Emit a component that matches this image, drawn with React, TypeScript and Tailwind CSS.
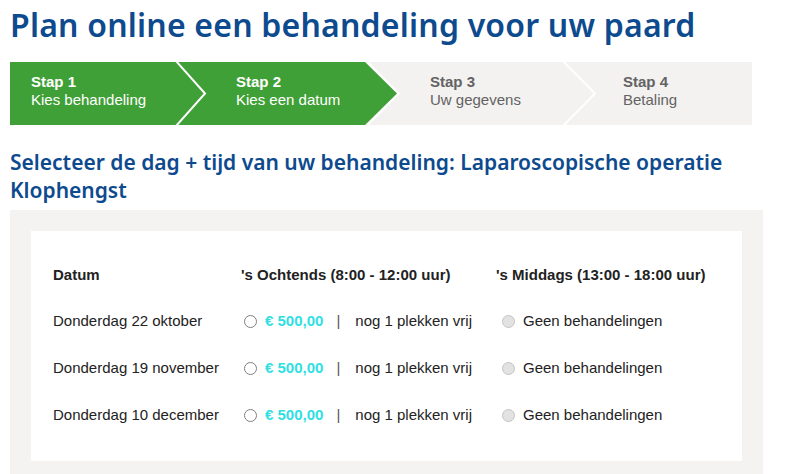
import React from "react";

type Step = { label: string; text: string; active: boolean; width: string; pad: string };

const steps: Step[] = [
  { label: "Stap 1", text: "Kies behandeling", active: true, width: "w-[195px]", pad: "pl-[21px]" },
  { label: "Stap 2", text: "Kies een datum", active: true, width: "w-[192px]", pad: "pl-[31px]" },
  { label: "Stap 3", text: "Uw gegevens", active: false, width: "w-[198px]", pad: "pl-[33px]" },
  { label: "Stap 4", text: "Betaling", active: false, width: "w-[157px]", pad: "pl-[28px]" },
];

const dates = ["Donderdag 22 oktober", "Donderdag 19 november", "Donderdag 10 december"];

function StepBar() {
  return (
    <div className="relative mt-[18px] h-[63px] w-[742px] bg-[#f3f2f1]">
      <svg className="absolute inset-0" width="742" height="63" viewBox="0 0 742 63">
        <polygon points="0,0 355,0 387,31.5 355,63 0,63" fill="#3fa037" />
        <polyline points="356.5,-1 389,31.5 356.5,64" fill="none" stroke="#ffffff" strokeWidth="2" />
        <polyline points="166,-1 195,31.5 166,64" fill="none" stroke="#ffffff" strokeWidth="2" />
        <polyline points="553,-1 585,31.5 553,64" fill="none" stroke="#ffffff" strokeWidth="2" />
      </svg>
      <div className="relative flex h-full">
        {steps.map((s) => (
          <div
            key={s.label}
            className={`${s.width} ${s.pad} pt-[11px] text-[15px] leading-[18px] ${
              s.active ? "text-white" : "text-[#636363]"
            }`}
          >
            <div className="font-bold">{s.label}</div>
            <div>{s.text}</div>
          </div>
        ))}
      </div>
    </div>
  );
}

export default function App() {
  return (
    <div className="h-[474px] w-[800px] overflow-hidden bg-white pl-[10px] font-['Liberation_Sans',Arial,sans-serif]">
      <h1 className="pt-[5px] font-['Noto_Sans',sans-serif] text-[32px] font-semibold leading-[39px] tracking-[0.2px] text-[#0d4a8e]">
        Plan online een behandeling voor uw paard
      </h1>

      <StepBar />

      <h2 className="mt-[23px] w-[742px] font-['Noto_Sans',sans-serif] text-[21px] font-semibold leading-[28px] text-[#0d4a8e]">
        Selecteer de dag + tijd van uw behandeling: Laparoscopische operatie Klophengst
      </h2>

      <div className="mt-[6px] w-[753px] bg-[#f4f3f2] p-[21px]">
        <div className="bg-white px-[22px] pb-[22px] pt-[22px] text-[15px] text-[#222222]">
          <div className="grid grid-cols-[188px_255px_1fr]">
            <div className="flex h-[45px] items-center font-bold">Datum</div>
            <div className="flex h-[45px] items-center font-bold">'s Ochtends (8:00 - 12:00 uur)</div>
            <div className="flex h-[45px] items-center font-bold">'s Middags (13:00 - 18:00 uur)</div>

            {dates.map((d) => (
              <React.Fragment key={d}>
                <div className="flex h-[47px] items-center">{d}</div>
                <div className="flex h-[47px] items-center">
                  <span className="ml-[3px] inline-block h-[13px] w-[13px] rounded-full border border-[#808080] bg-white" />
                  <span className="ml-[8px] font-bold text-[#2fdfe3]">€ 500,00</span>
                  <span className="ml-[13px] text-[#555555]">|</span>
                  <span className="ml-[15px]">nog 1 plekken vrij</span>
                </div>
                <div className="flex h-[47px] items-center">
                  <span className="ml-[6px] inline-block h-[13px] w-[13px] rounded-full border border-[#c4c4c4] bg-[#e2e2e2]" />
                  <span className="ml-[8px]">Geen behandelingen</span>
                </div>
              </React.Fragment>
            ))}
          </div>
        </div>
      </div>
    </div>
  );
}
